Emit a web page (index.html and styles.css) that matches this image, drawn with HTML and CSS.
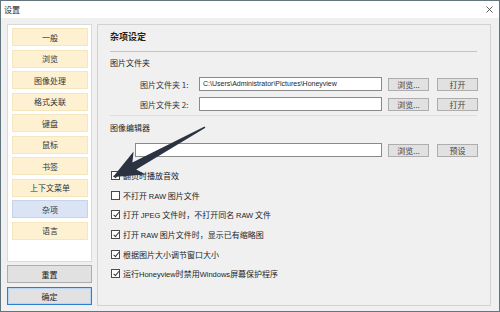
FILE: index.html
```html
<!doctype html>
<html lang="zh">
  <head>
    <meta charset="UTF-8" />
    <title>设置</title>
    <link rel="stylesheet" href="styles.css">
  </head>
  <body>
    <div class="window">
      <div class="titlebar">
        <span class="title">设置</span>
        <svg class="close" viewBox="0 0 8 8">
          <path d="M0.5 0.5L7.5 7.5M7.5 0.5L0.5 7.5" stroke="#333" stroke-width="0.9" fill="none" />
        </svg>
      </div>

      <div class="body">
        <div class="side">
          <div class="nav">
            <div class="nav-item">一般</div>
            <div class="nav-item">浏览</div>
            <div class="nav-item">图像处理</div>
            <div class="nav-item">格式关联</div>
            <div class="nav-item">键盘</div>
            <div class="nav-item">鼠标</div>
            <div class="nav-item">书签</div>
            <div class="nav-item">上下文菜单</div>
            <div class="nav-item active">杂项</div>
            <div class="nav-item">语言</div>
          </div>
          <button class="btn side-btn">重置</button>
          <button class="btn side-btn default">确定</button>
        </div>

        <div class="panel">
          <h1 class="heading">杂项设定</h1>
          <div class="sep"></div>

          <div class="group-label">图片文件夹</div>
          <div class="row row-first">
            <span class="field-label">图片文件夹 1:</span>
            <div class="input">C:\Users\Administrator\Pictures\Honeyview</div>
            <button class="btn small">浏览...</button>
            <button class="btn small">打开</button>
          </div>
          <div class="row row-second">
            <span class="field-label">图片文件夹 2:</span>
            <div class="input"></div>
            <button class="btn small">浏览...</button>
            <button class="btn small">打开</button>
          </div>
          <div class="sep sep-faint"></div>

          <div class="group-label editor-label">图像编辑器</div>
          <div class="row row-editor">
            <div class="input"></div>
            <button class="btn small">浏览...</button>
            <button class="btn small">预设</button>
          </div>

          <div class="checks">
            <label class="check"><span class="box on"></span><span>翻页时播放音效</span></label>
            <label class="check"><span class="box"></span><span>不打开 <span class="latin">RAW</span> 图片文件</span></label>
            <label class="check"><span class="box on"></span><span>打开 <span class="latin">JPEG</span> 文件时，不打开同名 <span class="latin">RAW</span> 文件</span></label>
            <label class="check"><span class="box on"></span><span>打开 <span class="latin">RAW</span> 图片文件时，显示已有缩略图</span></label>
            <label class="check"><span class="box on"></span><span>根据图片大小调节窗口大小</span></label>
            <label class="check"><span class="box on"></span><span>运行<span class="latin">Honeyview</span>时禁用<span class="latin">Windows</span>屏幕保护程序</span></label>
          </div>
        </div>
      </div>

      <!-- annotation arrow drawn over the dialog -->
      <svg class="arrow" viewBox="0 0 500 312">
        <polygon
          fill="#2b3241"
          points="113,177 145.6,174.6 136.2,169.4 205.4,127.8 204.6,126.4 132.4,162.4 133.6,151.6"
        />
      </svg>
    </div>
  </body>
</html>
```

FILE: styles.css
```css
* {
  margin: 0;
  padding: 0;
  box-sizing: border-box;
}

body {
  font-family: "Noto Sans CJK SC", "Noto Sans", sans-serif;
  font-size: 8px;
  color: #1e1e1e;
  background: #ffffff;
}

.window {
  position: relative;
  width: 500px;
  height: 312px;
  background: #f0f0f0;
  border: 1px solid #65757d;
  display: flex;
  flex-direction: column;
}

.titlebar {
  height: 17px;
  background: #ffffff;
  display: flex;
  align-items: center;
  justify-content: space-between;
  padding: 0 6px 0 3px;
}

.title {
  font-size: 8px;
  line-height: 12px;
}

.close {
  width: 7px;
  height: 7px;
}

.body {
  flex: 1;
  display: flex;
  gap: 5px;
  padding: 6px 7px 0 6px;
}

.side {
  width: 85px;
  display: flex;
  flex-direction: column;
}

.nav {
  height: 238px;
  background: #ffffff;
  border: 1px solid #dadada;
  padding: 3px 3px 0 4px;
  display: flex;
  flex-direction: column;
  gap: 3.55px;
}

.nav-item {
  height: 18px;
  background: #fdf1d2;
  border: 1px solid #f6e6bd;
  display: flex;
  align-items: center;
  justify-content: center;
  color: #333;
}

.nav-item.active {
  background: #dae4f4;
  border-color: #c6d3e8;
}

.btn {
  font-family: inherit;
  font-size: 8px;
  color: #1e1e1e;
  background: #e1e1e1;
  border: 1px solid #adadad;
  display: flex;
  align-items: center;
  justify-content: center;
}

.side-btn {
  height: 18px;
  margin-top: 3px;
}

.side-btn.default {
  margin-top: 4px;
  border-color: #2a7fd4;
  box-shadow: inset 0 0 0 1px #b8d6f3;
}

.panel {
  width: 394px;
  height: 282px;
  border: 1px solid #d2d2d2;
  padding: 0 12px 0 12px;
  display: flex;
  flex-direction: column;
}

.heading {
  font-size: 9px;
  font-weight: 700;
  line-height: 12px;
  height: 12px;
  margin-top: 6px;
}

.sep {
  height: 1px;
  background: #c4c4c4;
  margin-top: 8px;
  margin-right: 1px;
}

.sep-faint {
  background: #dedede;
  margin-top: 4px;
}

.group-label {
  height: 12px;
  line-height: 12px;
  margin-top: 5px;
}

.editor-label {
  margin-top: 6px;
}

.row {
  display: flex;
  align-items: center;
  height: 14px;
}

.row-first {
  margin-top: 8px;
}

.row-second {
  margin-top: 6px;
}

.row-editor {
  margin-top: 9px;
  padding-left: 25px;
}

.field-label {
  width: 89px;
  padding-left: 30px;
  color: #333;
}

.input {
  flex: 1;
  height: 14px;
  background: #ffffff;
  border: 1px solid #8a8a8a;
  font-family: "Liberation Sans", Arial, sans-serif;
  font-size: 7px;
  line-height: 12px;
  padding-left: 3px;
  white-space: nowrap;
  overflow: hidden;
}

.btn.small {
  width: 41px;
  height: 13px;
  margin-left: 6px;
  color: #444;
}

.btn.small + .btn.small {
  margin-left: 8px;
}

.checks {
  margin-top: 9px;
  display: flex;
  flex-direction: column;
}

.check {
  height: 19.6px;
  display: flex;
  align-items: center;
  gap: 3px;
  padding-left: 1px;
  white-space: nowrap;
}

.latin {
  font-family: "Liberation Sans", Arial, sans-serif;
  font-size: 7.5px;
}

.box {
  width: 9px;
  height: 9px;
  border: 1px solid #4a4a4a;
  background: #ffffff;
  flex-shrink: 0;
  position: relative;
}

.box.on::after {
  content: "";
  position: absolute;
  left: 2.5px;
  top: 0px;
  width: 2px;
  height: 4.5px;
  border-right: 1px solid #333;
  border-bottom: 1px solid #333;
  transform: rotate(40deg);
}

.arrow {
  position: absolute;
  left: -1px;
  top: -1px;
  width: 500px;
  height: 312px;
  pointer-events: none;
}
```
